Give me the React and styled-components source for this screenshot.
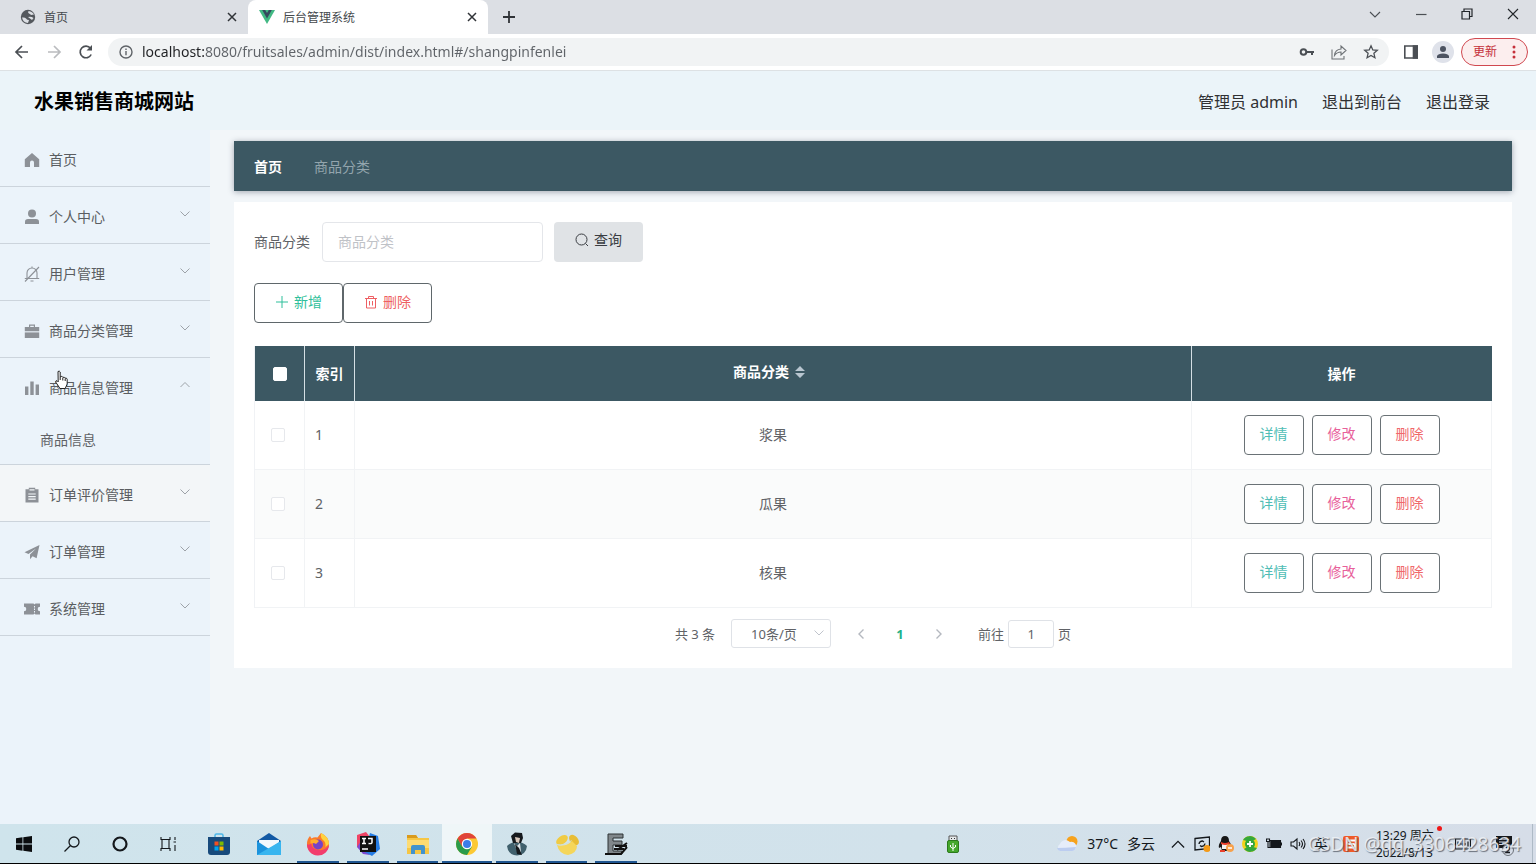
import React from "react";
import styled, { createGlobalStyle, css } from "styled-components";

const GlobalStyle = createGlobalStyle`
  *, *::before, *::after { box-sizing: border-box; }
  body {
    margin: 0;
    background: #f2f6f9;
    color: #606266;
    font-family: "Noto Sans", "Noto Sans CJK SC", sans-serif;
    font-size: 14px;
    line-height: 20px;
  }
  button, input, select { font: inherit; color: inherit; margin: 0; }
  button { border: 0; padding: 0; background: none; cursor: pointer; }
  a { color: inherit; text-decoration: none; }
  svg { display: block; flex: none; }
`;

const Screen = styled.div`
  display: flex;
  flex-direction: column;
  min-height: 100vh;
`;

/* ---------- browser window ---------- */

const TabStrip = styled.div`
  display: flex;
  height: 34px;
  background: #dcdfe4;
  color: #45494d;
  font-size: 12px;
`;

const Tab = styled.div`
  display: flex;
  align-items: center;
  gap: 8px;
  width: ${(p) => (p.$active ? 240 : 248)}px;
  padding: 0 8px 0 ${(p) => (p.$active ? 11 : 20)}px;
  border-radius: 8px 8px 0 0;
  background: ${(p) => (p.$active ? "#fff" : "transparent")};
`;

const TabTitle = styled.span`
  flex: 1;
  padding-top: 2px;
`;

const IconButton = styled.button`
  display: flex;
  align-items: center;
  justify-content: center;
  width: ${(p) => p.$w || 32}px;
  height: ${(p) => p.$h || 28}px;
  color: ${(p) => p.$color || "#4b4f54"};
`;

const Spacer = styled.div`
  flex: 1;
`;

const Toolbar = styled.div`
  display: flex;
  align-items: center;
  height: 37px;
  padding: 0 8px 0 6px;
  background: #fff;
  border-bottom: 1px solid #dde1e4;
`;

const AddressBar = styled.label`
  display: flex;
  flex: 1;
  align-items: center;
  height: 28px;
  margin: 0 6px;
  padding: 0 2px 0 10px;
  border-radius: 14px;
  background: #f1f3f4;
  color: #5f6368;
`;

const AddressInput = styled.input`
  flex: 1;
  min-width: 0;
  margin-left: 8px;
  padding: 0;
  border: 0;
  outline: 0;
  font-size: 14px;
  line-height: 24px;
  color: #5f6368;
  background: linear-gradient(to right, #202124 63px, #5f6368 63px);
  background-clip: text;
  -webkit-background-clip: text;
  -webkit-text-fill-color: transparent;
`;

const Avatar = styled.span`
  display: flex;
  align-items: center;
  justify-content: center;
  width: 22px;
  height: 22px;
  border-radius: 50%;
  background: #dfe2ea;
`;

const UpdateButton = styled.button`
  display: flex;
  align-items: center;
  justify-content: space-between;
  width: 67px;
  height: 28px;
  margin-left: 2px;
  padding: 0 11px;
  border: 1px solid #d0484f;
  border-radius: 14px;
  background: #fceeee;
  color: #c5303a;
  font-size: 12px;
`;

/* ---------- admin page ---------- */

const PageHeader = styled.header`
  display: flex;
  align-items: center;
  justify-content: space-between;
  height: 59px;
  padding: 2px 46px 0 34px;
  background: #ebf4f9;
`;

const SiteTitle = styled.h1`
  margin: 0;
  color: #000;
  font-size: 20px;
  line-height: 28px;
  font-weight: 700;
`;

const UserLinks = styled.nav`
  display: flex;
  gap: 24px;
  color: #303133;
  font-size: 16px;
`;

const PageBody = styled.div`
  display: flex;
  flex: 1;
`;

const Sidebar = styled.nav`
  flex: none;
  width: 210px;
  background: #ebf3fa;
`;

const MenuItem = styled.button`
  display: flex;
  align-items: center;
  width: 100%;
  height: 57px;
  padding: 4px 20px 0 24px;
  border-bottom: 1px solid ${(p) => (p.$open ? "transparent" : "#ccd4dc")};
  background: ${(p) => (p.$hover ? "#f3f6f8" : "transparent")};
  color: #5a5d61;
  text-align: left;
`;

const MenuLabel = styled.span`
  flex: 1;
  margin-left: 9px;
`;

const Muted = styled.span`
  padding-bottom: 6px;
  color: #9da2a8;
`;

const SubMenuItem = styled.a`
  display: flex;
  align-items: center;
  height: 50px;
  padding-left: 40px;
  border-bottom: 1px solid #ccd4dc;
`;

const Main = styled.main`
  flex: 1;
  min-width: 0;
  padding: 11px 24px 24px;
`;

const Breadcrumb = styled.nav`
  display: flex;
  align-items: center;
  gap: 32px;
  height: 50px;
  padding: 2px 20px 0;
  background: #3c5863;
  box-shadow: 0 1px 6px rgba(40, 50, 70, 0.4);
  color: #93a5ad;
`;

const CrumbHome = styled.a`
  color: #fff;
  font-weight: 700;
`;

const Panel = styled.section`
  margin-top: 11px;
  padding: 20px;
  background: #fff;
`;

const SearchForm = styled.form`
  display: flex;
  align-items: center;
`;

const SearchField = styled.input`
  width: 221px;
  height: 40px;
  margin: 0 11px 0 12px;
  padding: 0 15px 2px;
  border: 1px solid #e4e6ea;
  border-radius: 4px;
  background: #fff;
  &::placeholder { color: #bfc2c7; opacity: 1; }
`;

const ActionButton = styled.button`
  display: flex;
  align-items: center;
  justify-content: center;
  gap: 5px;
  width: 89px;
  height: 40px;
  border-radius: 4px;
  ${(p) =>
    p.$filled
      ? css`
          padding-bottom: 4px;
          background: #e0e3e6;
          color: #3a3d42;
        `
      : css`
          padding-bottom: 2px;
          border: 1px solid #5f676b;
          background: #fff;
          color: ${p.$color};
        `}
`;

const ButtonRow = styled.div`
  display: flex;
  margin: 21px 0 23px;
`;

const DataTable = styled.table`
  width: 100%;
  table-layout: fixed;
  border-spacing: 0;
  border-left: 1px solid #f0f2f5;
`;

const HeadCell = styled.th`
  width: ${(p) => (p.$w ? p.$w + "px" : "auto")};
  height: 55px;
  padding: 0;
  border-right: 1px solid ${(p) => (p.$last ? "#3c5863" : "#d5dfe4")};
  background: #3c5863;
  color: #fff;
  font-weight: 700;
  text-align: center;
`;

const Cell = styled.td`
  height: 69px;
  padding: 0 10px;
  border-right: 1px solid #f1f3f5;
  border-bottom: 1px solid #f1f3f5;
  text-align: ${(p) => p.$align || "center"};
  tr:nth-child(even) > & { background: #fafbfb; }
`;

const PickCell = styled(Cell)`
  padding: 0 12px 0 8px;
`;

const CheckBox = styled.input`
  appearance: none;
  display: block;
  width: 14px;
  height: 14px;
  margin: 0 auto;
  border: 1px solid ${(p) => (p.$head ? "#fff" : "#e6e8ec")};
  border-radius: 2px;
  background: #fff;
`;

const SortLabel = styled.span`
  display: flex;
  align-items: center;
  justify-content: center;
  gap: 6px;
  padding: 0 8px 4px 0;
`;

const RowActions = styled.div`
  display: flex;
  justify-content: center;
  gap: 8px;
`;

const RowButton = styled.button`
  width: 60px;
  height: 40px;
  padding-bottom: 2px;
  border: 1px solid #6a7276;
  border-radius: 4px;
  background: #fff;
  color: ${(p) => p.$color};
`;

const Pagination = styled.div`
  display: flex;
  align-items: center;
  justify-content: center;
  margin-top: 11px;
  font-size: 13px;
`;

const SizePicker = styled.div`
  position: relative;
  margin: 0 14px 0 16px;
`;

const SizeSelect = styled.select`
  appearance: none;
  display: block;
  width: 100px;
  height: 29px;
  padding: 0 20px 0 19px;
  border: 1px solid #dfe2e7;
  border-radius: 3px;
  background: #fff;
`;

const SelectArrow = styled.span`
  position: absolute;
  top: 9px;
  right: 7px;
  color: #c0c4cc;
  pointer-events: none;
`;

const PageNumber = styled.button`
  width: 46px;
  height: 28px;
  color: #1fb28a;
  font-weight: 700;
`;

const JumpLabel = styled.label`
  display: flex;
  align-items: center;
  gap: 4px;
  margin-left: 23px;
`;

const JumpInput = styled.input`
  width: 46px;
  height: 28px;
  padding: 0;
  border: 1px solid #dfe2e7;
  border-radius: 3px;
  background: #fff;
  text-align: center;
`;

/* ---------- desktop taskbar ---------- */

const Taskbar = styled.footer`
  position: relative;
  display: flex;
  align-items: stretch;
  height: 40px;
  background: linear-gradient(to right, #cfe4ec, #d2e2eb 60%, #d6dde8);
  border-bottom: 1px solid #000;
  color: #14181c;
`;

const TaskButton = styled.button`
  display: flex;
  align-items: center;
  justify-content: center;
  width: 48px;
`;

const AppList = styled.div`
  display: flex;
  width: 447px;
  margin-left: 2px;
`;

const AppButton = styled.button`
  display: flex;
  flex: 1;
  align-items: center;
  justify-content: center;
  position: relative;
  background: ${(p) => (p.$active ? "#eff6f8" : "transparent")};
  &::after {
    content: "";
    display: ${(p) => (p.$running ? "block" : "none")};
    position: absolute;
    bottom: 0;
    left: ${(p) => (p.$active ? 0 : 4)}px;
    right: ${(p) => (p.$active ? 0 : 4)}px;
    height: 2px;
    background: #1f5590;
  }
`;

const UsbButton = styled(TaskButton)`
  width: 24px;
  margin-right: 81px;
`;

const Weather = styled.button`
  display: flex;
  align-items: center;
  gap: 9px;
  padding: 0 11px 0 10px;
  font-size: 14px;
`;

const TrayButton = styled.button`
  display: flex;
  align-items: center;
  justify-content: center;
  width: ${(p) => p.$w || 24}px;
`;

const Clock = styled.button`
  position: relative;
  width: 80px;
  padding-left: 6px;
  font-size: 12px;
  line-height: 17px;
  text-align: left;
  white-space: nowrap;
`;

const ClockDot = styled.i`
  position: absolute;
  top: 2px;
  right: 8px;
  width: 5px;
  height: 5px;
  border-radius: 50%;
  background: #f01818;
`;

const ShowDesktop = styled.button`
  width: 4px;
  border-left: 1px solid #aebac6;
`;

const Watermark = styled.span`
  position: absolute;
  top: 8px;
  right: 15px;
  color: rgba(240, 243, 247, 0.85);
  font-size: 19px;
  line-height: 24px;
  text-shadow: 1px 1px 1px rgba(70, 75, 85, 0.75);
  white-space: nowrap;
  pointer-events: none;
`;

const HandPointer = styled.svg`
  position: absolute;
  top: 370px;
  left: 54px;
  pointer-events: none;
`;

/* ---------- icons ---------- */

const Line = ({ d, size = 16, box = 16, w = 1.4, children }) => (
  <svg width={size} height={size} viewBox={`0 0 ${box} ${box}`} fill="none" stroke="currentColor" strokeWidth={w}>
    {d && <path d={d} />}
    {children}
  </svg>
);

const CloseIcon = () => <Line size={10} box={10} w={1.5} d="M1 1l8 8M9 1l-8 8" />;
const ChevronDown = () => <Line size={10} box={10} w={1} d="M.5 2.5L5 7l4.500-4.500" />;
const ChevronUp = () => <Line size={10} box={10} w={1} d="M.5 7L5 2.500 9.500 7" />;

const menuIcons = {
  home: <path d="M8 1L.8 7.200V15H6v-4.500a2 2 0 014 0V15h5.200V7.200z" />,
  user: (
    <>
      <circle cx="8" cy="4.500" r="4" />
      <path d="M1 15v-2.200Q1 10 4 10h8q3 0 3 2.800V15z" />
    </>
  ),
  bell: (
    <g fill="none" stroke="#8d9197" strokeWidth="1.100">
      <path d="M3 12.500V7a5 5 0 0110 0v5.500M.8 12.500h14.400M8 .5V2M6.500 15h3M15 1L1 15.500" />
    </g>
  ),
  box: (
    <>
      <path d="M5 4V1.500h6V4h4.200v4.200H.8V4zM6.200 4h3.600V2.700H6.200z" fillRule="evenodd" />
      <path d="M.8 9.400h14.400V15H.8z" />
    </>
  ),
  chart: <path d="M1 6.500h3.400V15H1zM6.300 1.500h3.400V15H6.300zM11.600 4.500H15V15h-3.400z" />,
  order: (
    <path
      fillRule="evenodd"
      d="M1.500 2.200h3.300V.8h6.400v1.400h3.300V15.500h-13zM5.500 3.400h5V2.200h-5zM4.300 6.400v1.200h7.400V6.400zM4.300 9v1.200h7.400V9zM4.300 11.600v1.200h7.400v-1.200z"
    />
  ),
  plane: <path d="M15.500 1L.5 8.200l4 1.700L12 4.500 6 10.500v4.700l2.600-3 4 2z" />,
  ticket: (
    <path
      fillRule="evenodd"
      d="M0 2.500h9.500l1 1 1-1H16v3.200a2.300 2.300 0 000 4.600v3.200h-4.500l-1-1-1 1H0v-3.200a2.300 2.300 0 000-4.600zM10 5v1.500h1V5zM10 7.500V9h1V7.500zM10 10v1.500h1V10z"
    />
  ),
};

const MenuIcon = ({ name }) => (
  <svg width="16" height="16" viewBox="0 0 16 16" fill="#8d9197">
    {menuIcons[name]}
  </svg>
);

const menu = [
  { icon: "home", label: "首页" },
  { icon: "user", label: "个人中心", group: true },
  { icon: "bell", label: "用户管理", group: true },
  { icon: "box", label: "商品分类管理", group: true },
  { icon: "chart", label: "商品信息管理", group: true, items: ["商品信息"] },
  { icon: "order", label: "订单评价管理", group: true, hover: true },
  { icon: "plane", label: "订单管理", group: true },
  { icon: "ticket", label: "系统管理", group: true },
];

const rows = ["浆果", "瓜果", "核果"];

const apps = [
  {
    name: "Store",
    art: (
      <>
        <path d="M8 6V3.500Q8 2 9.500 2h5Q16 2 16 3.500V6" fill="none" stroke="#4cb7e8" strokeWidth="1.500" />
        <path d="M1 5h22v15q0 3-3 3H4q-3 0-3-3z" fill="#174a7c" />
        <path d="M7.500 9.500h4v4h-4z" fill="#f25022" />
        <path d="M12.500 9.500h4v4h-4z" fill="#7fba00" />
        <path d="M7.500 14.500h4v4h-4z" fill="#00a4ef" />
        <path d="M12.500 14.500h4v4h-4z" fill="#ffb900" />
      </>
    ),
  },
  {
    name: "Mail",
    art: (
      <>
        <path d="M0 9L12 1l12 8v3H0z" fill="#1259a4" />
        <path d="M2 8h20v8H2z" fill="#f2f8fc" />
        <path d="M0 9l12 8L24 9v14H0z" fill="#1c93dc" />
        <path d="M24 9v14H0z" fill="#38b5ef" />
      </>
    ),
  },
  {
    name: "Firefox",
    running: true,
    art: (
      <>
        <path d="M12 23A11 11 0 011 12Q1 7 4 4l1.500 2.500q3-2 6-1L15 1q8 4 8 11a11 11 0 01-11 11z" fill="#fb7a2b" />
        <path d="M1 12a11 11 0 0022 1q-4 6-10 5-7 0-8-7-2 3-4 1z" fill="#f23d6d" />
        <path d="M15 1q8 4 8 11l-3.500 3q.5-5-2.500-7-3-2.500-2-7z" fill="#ffd23e" />
        <circle cx="12" cy="12.500" r="5" fill="#7543c6" />
        <path d="M4.500 8q5.500-2 8.500 1l-3 3q-3-2-5.500 0z" fill="#ffae2b" />
      </>
    ),
  },
  {
    name: "IntelliJ IDEA",
    running: true,
    art: (
      <>
        <path d="M1 3l9-3 4 5-8 12-5-2z" fill="#f04465" />
        <path d="M1 15l4-6 9 14-7-1z" fill="#7d4bd2" />
        <path d="M14 1l8 3 2 13-8 7-7-4z" fill="#257ce4" />
        <path d="M4 4h16v16H4z" fill="#111" />
        <path d="M6 6.500h4M8 6.500v5M6 11.500h4M12 6.500h4v4q0 1.500-3.500 1M6 17h6" stroke="#fff" strokeWidth="1.500" fill="none" />
      </>
    ),
  },
  {
    name: "Explorer",
    running: true,
    art: (
      <>
        <path d="M1 3h9l2 3h11v16H1z" fill="#f6c644" />
        <path d="M1 3h9l2 3H1z" fill="#d99a1d" />
        <path d="M1 8h22v8H1z" fill="#fddb72" />
        <path d="M5 22v-7q0-2 2-2h10q2 0 2 2v7h-4v-4H9v4z" fill="#4293cd" />
      </>
    ),
  },
  {
    name: "Chrome",
    running: true,
    active: true,
    art: (
      <>
        <circle cx="12" cy="12" r="11" fill="#fcc934" />
        <path d="M2.500 6.500A11 11 0 0121.500 6.500H12L7 15z" fill="#e0443a" />
        <path d="M2.500 6.500A11 11 0 0012 23l5-8.500H7z" fill="#2a9b4b" />
        <circle cx="12" cy="12" r="5.200" fill="#fff" />
        <circle cx="12" cy="12" r="4" fill="#3b7de9" />
      </>
    ),
  },
  {
    name: "Game",
    running: true,
    art: (
      <>
        <path d="M2 14q4-4 10-4t10 4q-1 9-10 9.500Q3 23 2 14z" fill="#40606d" />
        <path d="M6 4l4-3.500 7 .5 1 5-2 5H8z" fill="#15191d" />
        <path d="M10 5l5 1-1 5-3-1z" fill="#d9c8bc" />
        <path d="M9 11l3 3 3-3 1 9-4-1z" fill="#dce3e7" />
        <path d="M10 12l4 4 3 7-5-1z" fill="#15191d" />
      </>
    ),
  },
  {
    name: "Database",
    running: true,
    art: (
      <>
        <ellipse cx="7" cy="8" rx="6.500" ry="4" fill="#f0cb43" transform="rotate(-35 7 8)" />
        <ellipse cx="19" cy="8" rx="6" ry="4" fill="#e8bd35" transform="rotate(50 19 8)" />
        <path d="M2 13q9 2 15-4l5 5q0 7-9 9Q4 22 2 13z" fill="#f5d65a" />
        <path d="M1.500 12.500q9 1.500 15-4" stroke="#cfe0d8" fill="none" />
      </>
    ),
  },
  {
    name: "Editor",
    running: true,
    art: (
      <>
        <path d="M4 2h15v4H9v3h9v4H9v6h9v3H4z" fill="#80878b" stroke="#2d3235" />
        <path d="M1 22h16l6-7M11 14h12M13 18l10-7M10 17h10" stroke="#111" strokeWidth="2" fill="none" />
      </>
    ),
  },
];

const Svg24 = ({ size = 24, children }) => (
  <svg width={size} height={size} viewBox="0 0 24 24" fill="none">
    {children}
  </svg>
);

function BrowserChrome() {
  return (
    <>
      <TabStrip>
        <Tab>
          <svg width="16" height="16" viewBox="0 0 16 16">
            <circle cx="8" cy="8" r="7.200" fill="#54585d" />
            <path d="M8.500 2q-1 2 .5 2.500T11 6l3-.5Q12.500 2.500 8.500 2zM2 8.500q3-.5 4 1T9 11l-1 3Q3 13.500 2 8.500zM8 8q3-1 5.500 1L12 11z" fill="#dcdfe4" />
          </svg>
          <TabTitle>首页</TabTitle>
          <IconButton $w={16} $color="#303337" aria-label="关闭标签页"><CloseIcon /></IconButton>
        </Tab>
        <Tab $active>
          <svg width="16" height="16" viewBox="0 0 16 16">
            <path d="M0 1h16L8 15z" fill="#41b883" />
            <path d="M3.200 1h3L8 4l1.800-3h3L8 9.500z" fill="#35495e" />
          </svg>
          <TabTitle>后台管理系统</TabTitle>
          <IconButton $w={16} $color="#303337" aria-label="关闭标签页"><CloseIcon /></IconButton>
        </Tab>
        <IconButton $w={42} $h={34} $color="#303337" aria-label="新标签页">
          <Line size={12} box={12} w={1.8} d="M6 0v12M0 6h12" />
        </IconButton>
        <Spacer />
        <IconButton $w={46} aria-label="搜索标签页"><Line size={12} box={12} w={1.1} d="M1 4l5 5 5-5" /></IconButton>
        <IconButton $w={46} aria-label="最小化"><Line size={12} box={12} w={1.2} d="M1 6.500h10.500" /></IconButton>
        <IconButton $w={46} $color="#22262a" aria-label="还原">
          <Line size={12} box={12} w={1.2} d="M1 3.500h7.500V11H1zM3 3.500V1h8v7.500H8.500" />
        </IconButton>
        <IconButton $w={46} $color="#22262a" aria-label="关闭"><Line size={12} box={12} w={1.1} d="M1 1l10 10M11 1L1 11" /></IconButton>
      </TabStrip>
      <Toolbar>
        <IconButton aria-label="后退"><Line w={1.7} d="M14 8H2.500M8 2L2 8l6 6" /></IconButton>
        <IconButton $color="#babcbf" aria-label="前进"><Line w={1.7} d="M2 8h11.500M8 2l6 6-6 6" /></IconButton>
        <IconButton aria-label="重新加载">
          <Line w={1.7} d="M13.200 10.500A5.800 5.800 0 1112.500 4.300">
            <path d="M14 1v5.500H8.500z" fill="currentColor" stroke="none" />
          </Line>
        </IconButton>
        <AddressBar>
          <Line w={1.4}>
            <circle cx="8" cy="8" r="6" />
            <path d="M8 7v4.200M8 4.500V6" />
          </Line>
          <AddressInput aria-label="地址" defaultValue="localhost:8080/fruitsales/admin/dist/index.html#/shangpinfenlei" />
          <IconButton aria-label="密码">
            <Line w={2}>
              <circle cx="4.500" cy="8" r="2.800" />
              <path d="M7.500 8H15M13 8v3" />
            </Line>
          </IconButton>
          <IconButton $color="#6f7377" aria-label="分享">
            <Line w={1.1} d="M1 5.500V15h12v-3M3.500 11.500Q4 5.500 10 5V2l5 4.500-5 4.500V8Q6 8 3.500 11.500z" />
          </IconButton>
          <IconButton aria-label="收藏">
            <Line w={1.3} d="M8 1.800l1.800 4.100 4.500.4-3.400 3 1 4.400L8 11.400l-3.900 2.300 1-4.400-3.400-3 4.500-.4z" />
          </IconButton>
        </AddressBar>
        <IconButton aria-label="侧边栏">
          <Line w={1.6}>
            <path d="M1.800 2h12.400v12H1.800z" />
            <path d="M10.500 2h3.700v12h-3.700z" fill="currentColor" />
          </Line>
        </IconButton>
        <IconButton aria-label="用户">
          <Avatar>
            <svg width="14" height="14" viewBox="0 0 14 14" fill="#4c5361">
              <circle cx="7" cy="4" r="3" />
              <path d="M1 13v-2q1-2.500 6-2.500t6 2.500v2z" />
            </svg>
          </Avatar>
        </IconButton>
        <UpdateButton>
          更新
          <svg width="4" height="14" viewBox="0 0 4 14" fill="currentColor">
            <circle cx="2" cy="2" r="1.500" />
            <circle cx="2" cy="7" r="1.500" />
            <circle cx="2" cy="12" r="1.500" />
          </svg>
        </UpdateButton>
      </Toolbar>
    </>
  );
}

function SideMenu() {
  return (
    <Sidebar>
      {menu.map((m) => (
        <React.Fragment key={m.label}>
          <MenuItem $open={!!m.items} $hover={m.hover}>
            <MenuIcon name={m.icon} />
            <MenuLabel>{m.label}</MenuLabel>
            {m.group && <Muted>{m.items ? <ChevronUp /> : <ChevronDown />}</Muted>}
          </MenuItem>
          {m.items && m.items.map((s) => <SubMenuItem href="#" key={s}>{s}</SubMenuItem>)}
        </React.Fragment>
      ))}
    </Sidebar>
  );
}

function CategoryTable() {
  return (
    <DataTable>
      <thead>
        <tr>
          <HeadCell $w={50}><CheckBox type="checkbox" $head aria-label="全选" /></HeadCell>
          <HeadCell $w={50}>索引</HeadCell>
          <HeadCell>
            <SortLabel>
              商品分类
              <svg width="10" height="14" viewBox="0 0 10 14" fill="#b9c6d0">
                <path d="M5 1l5 5H0zM5 13l5-5H0z" />
              </svg>
            </SortLabel>
          </HeadCell>
          <HeadCell $w={300} $last>操作</HeadCell>
        </tr>
      </thead>
      <tbody>
        {rows.map((name, i) => (
          <tr key={name}>
            <PickCell><CheckBox type="checkbox" aria-label={name} /></PickCell>
            <Cell $align="left">{i + 1}</Cell>
            <Cell>{name}</Cell>
            <Cell>
              <RowActions>
                <RowButton $color="#4fbdb5">详情</RowButton>
                <RowButton $color="#e8609a">修改</RowButton>
                <RowButton $color="#f0686a">删除</RowButton>
              </RowActions>
            </Cell>
          </tr>
        ))}
      </tbody>
    </DataTable>
  );
}

function DesktopBar() {
  return (
    <Taskbar>
      <TaskButton aria-label="开始">
        <svg width="16" height="16" viewBox="0 0 16 16" fill="#0a0c0e">
          <path d="M0 2.200l6.500-.9v6.200H0zM7.300 1.200L16 0v7.500H7.300zM0 8.400h6.500v6.300L0 13.800zM7.300 8.400H16V16l-8.700-1.200z" />
        </svg>
      </TaskButton>
      <TaskButton aria-label="搜索">
        <Line w={1.3}><circle cx="10" cy="6" r="5" /><path d="M6.500 9.500L.5 15.500" /></Line>
      </TaskButton>
      <TaskButton aria-label="Cortana"><Line w={2.2}><circle cx="8" cy="8" r="6.500" /></Line></TaskButton>
      <TaskButton aria-label="任务视图">
        <Line w={1.1} d="M1 1v2.500h9V1M1 15v-2.500h9V15M2 3.500v9M9 3.500v9M15 1v3M15 9v6M13.500 6h3" />
      </TaskButton>
      <AppList>
        {apps.map((a) => (
          <AppButton key={a.name} $running={a.running} $active={a.active} aria-label={a.name}>
            <Svg24>{a.art}</Svg24>
          </AppButton>
        ))}
      </AppList>
      <Spacer />
      <UsbButton aria-label="USB">
        <svg width="12" height="18" viewBox="0 0 12 18">
          <path d="M2 1h8v5H2z" fill="#e4e8ea" stroke="#555" />
          <path d="M4 3h1v1H4zM7 3h1v1H7z" fill="#333" />
          <rect x=".5" y="5.500" width="11" height="12" rx="1.500" fill="#45a72c" stroke="#2c7a1c" />
          <path d="M6 8v8M3.500 10v2L6 13.500 8.500 12v-2" stroke="#fff" fill="none" />
        </svg>
      </UsbButton>
      <Weather>
        <svg width="22" height="18" viewBox="0 0 22 18">
          <circle cx="16" cy="6.500" r="5.500" fill="#f6a21c" />
          <path d="M4 16a4 4 0 010-7 6 6 0 0110-2 4.500 4.500 0 013 9z" fill="#e6edfa" />
          <path d="M1 13q8 0 19-1-1 4-4 4H4q-2 0-3-3z" fill="#bccdf0" />
        </svg>
        <span>37°C</span>
        <span>多云</span>
      </Weather>
      <TrayButton aria-label="显示隐藏的图标"><Line size={14} w={1.4} d="M1 12l7-7 7 7" /></TrayButton>
      <TrayButton aria-label="同步">
        <Line w={1.3} d="M1 2.500L15.500 1v11.500L1 14zM5 8q.5-3 3.500-3L10 6M11 7.500q-.5 3-3.500 3L6 9.500">
          <circle cx="13" cy="12.500" r="3.500" fill="#f39a17" stroke="none" />
        </Line>
      </TrayButton>
      <TrayButton aria-label="QQ">
        <svg width="16" height="16" viewBox="0 0 16 16">
          <path d="M7 0q4 0 4 5 3 4 2 7l-2-1-1 4H4l-1-4-2 1q-1-3 2-7 0-5 4-5z" fill="#171717" />
          <path d="M4 8h6v5H4z" fill="#f3f3f3" />
          <path d="M3 6q4 2 8 0l1 2q-5 2-9 0zM2 14h5v2H2z" fill="#e8402c" />
          <circle cx="12" cy="12" r="4" fill="#f7a14c" />
          <path d="M10 12h4" stroke="#fff" strokeWidth="1.500" />
        </svg>
      </TrayButton>
      <TrayButton aria-label="安全卫士">
        <svg width="16" height="16" viewBox="0 0 16 16">
          <circle cx="8" cy="8" r="8" fill="#f4d21c" />
          <path d="M1 4a8 8 0 0113-1L9 6zM15 12a8 8 0 01-13 1l5-3z" fill="#35a83b" />
          <circle cx="8" cy="8" r="5" fill="#35a83b" />
          <path d="M8 5v6M5 8h6" stroke="#fff" strokeWidth="1.800" />
        </svg>
      </TrayButton>
      <TrayButton aria-label="电池">
        <Line w={1.1}>
          <path d="M4 4.500h10.500v7H4z" />
          <path d="M5 5.500h8.500v5H5z" fill="currentColor" />
          <path d="M.5 3h3v2.500h-3zM2 5.500v6h2M15.500 6.500v3" />
        </Line>
      </TrayButton>
      <TrayButton aria-label="音量">
        <Line w={1.1} d="M1 6h2.500L7 3v10l-3.500-3H1zM9 6q1.500 2 0 4M11 4.500q3 3.500 0 7M13 3q4 5 0 10" />
      </TrayButton>
      <TrayButton $w={22}>英</TrayButton>
      <TrayButton $w={38} aria-label="搜狗输入法">
        <svg width="16" height="16" viewBox="0 0 16 16">
          <rect width="16" height="16" rx="2" fill="#ef5a28" />
          <path d="M12 4.500H6q-2 0-2 1.700T6 8h4q2 0 2 1.700t-2 1.800H4" stroke="#fff" strokeWidth="1.800" fill="none" />
        </svg>
      </TrayButton>
      <Clock>
        13:29 周六
        <br />
        2022/8/13
        <ClockDot />
      </Clock>
      <TrayButton $w={26} aria-label="输入指示">
        <Line w={1.2} d="M.5 3h15v10H.5zM8 3v10M5 8h6M3 5.500v5M13 5.500v5" />
      </TrayButton>
      <TrayButton $w={56} aria-label="通知">
        <svg width="20" height="24" viewBox="0 0 20 24">
          <path d="M2 4h16v12h-6l-3 3v-3H2z" fill="#14181c" />
          <path d="M5 7.500h10M5 10h10M5 12.500h7" stroke="#d6dde8" />
          <circle cx="14" cy="18" r="5.500" fill="#d6dde8" stroke="#6b7077" />
          <path d="M12 16q2-2 3.500 0 .5 1.500-3.500 4.500h4" stroke="#14181c" strokeWidth="1.300" fill="none" />
        </svg>
      </TrayButton>
      <ShowDesktop aria-label="显示桌面" />
      <Watermark>CSDN @qq_3306428634</Watermark>
    </Taskbar>
  );
}

export default function App() {
  return (
    <Screen>
      <GlobalStyle />
      <BrowserChrome />
      <PageHeader>
        <SiteTitle>水果销售商城网站</SiteTitle>
        <UserLinks>
          <a href="#">管理员 admin</a>
          <a href="#">退出到前台</a>
          <a href="#">退出登录</a>
        </UserLinks>
      </PageHeader>
      <PageBody>
        <SideMenu />
        <Main>
          <Breadcrumb>
            <CrumbHome href="#">首页</CrumbHome>
            <span>商品分类</span>
          </Breadcrumb>
          <Panel>
            <SearchForm onSubmit={(e) => e.preventDefault()}>
              <label htmlFor="category">商品分类</label>
              <SearchField id="category" placeholder="商品分类" />
              <ActionButton $filled>
                <Line size={14} box={14} w={1}><circle cx="6.500" cy="6.500" r="5.500" /><path d="M10.500 10.500L13 13" /></Line>
                查询
              </ActionButton>
            </SearchForm>
            <ButtonRow>
              <ActionButton $color="#2fbf9b">
                <Line size={14} box={14} w={1} d="M7 1v12M1 7h12" />
                新增
              </ActionButton>
              <ActionButton $color="#ee5f63">
                <Line size={14} box={14} w={1} d="M1 3.500h12M4.500 3.500v-2h5v2M2.500 3.500v9.500h9V3.500M5.500 6v4.500M8.500 6v4.500" />
                删除
              </ActionButton>
            </ButtonRow>
            <CategoryTable />
            <Pagination>
              <span>共 3 条</span>
              <SizePicker>
                <SizeSelect aria-label="每页条数">
                  <option>10条/页</option>
                </SizeSelect>
                <SelectArrow><ChevronDown /></SelectArrow>
              </SizePicker>
              <IconButton $color="#b4b8bf" aria-label="上一页"><Line size={12} box={12} w={1.4} d="M8.500 1.500L4 6l4.500 4.500" /></IconButton>
              <PageNumber>1</PageNumber>
              <IconButton $color="#b4b8bf" aria-label="下一页"><Line size={12} box={12} w={1.4} d="M3.500 1.500L8 6l-4.500 4.500" /></IconButton>
              <JumpLabel>
                前往
                <JumpInput defaultValue="1" />
                页
              </JumpLabel>
            </Pagination>
          </Panel>
        </Main>
      </PageBody>
      <DesktopBar />
      <HandPointer width="16" height="20" viewBox="0 0 16 20">
        <path
          d="M4 1.500q1.500-1 2.200.5v5l1-.6q1.300-.2 1.600 1 1.600-.7 2.200.7 1.800-.5 2.200 1.200V14l-2 4.500H6L2 12.500q-.8-2 1-1.800l1.200 1.200z"
          fill="#fff"
          stroke="#222"
        />
        <path d="M6.200 7v3M8.800 8v2.500M11.200 8.500V11" stroke="#222" />
      </HandPointer>
    </Screen>
  );
}
